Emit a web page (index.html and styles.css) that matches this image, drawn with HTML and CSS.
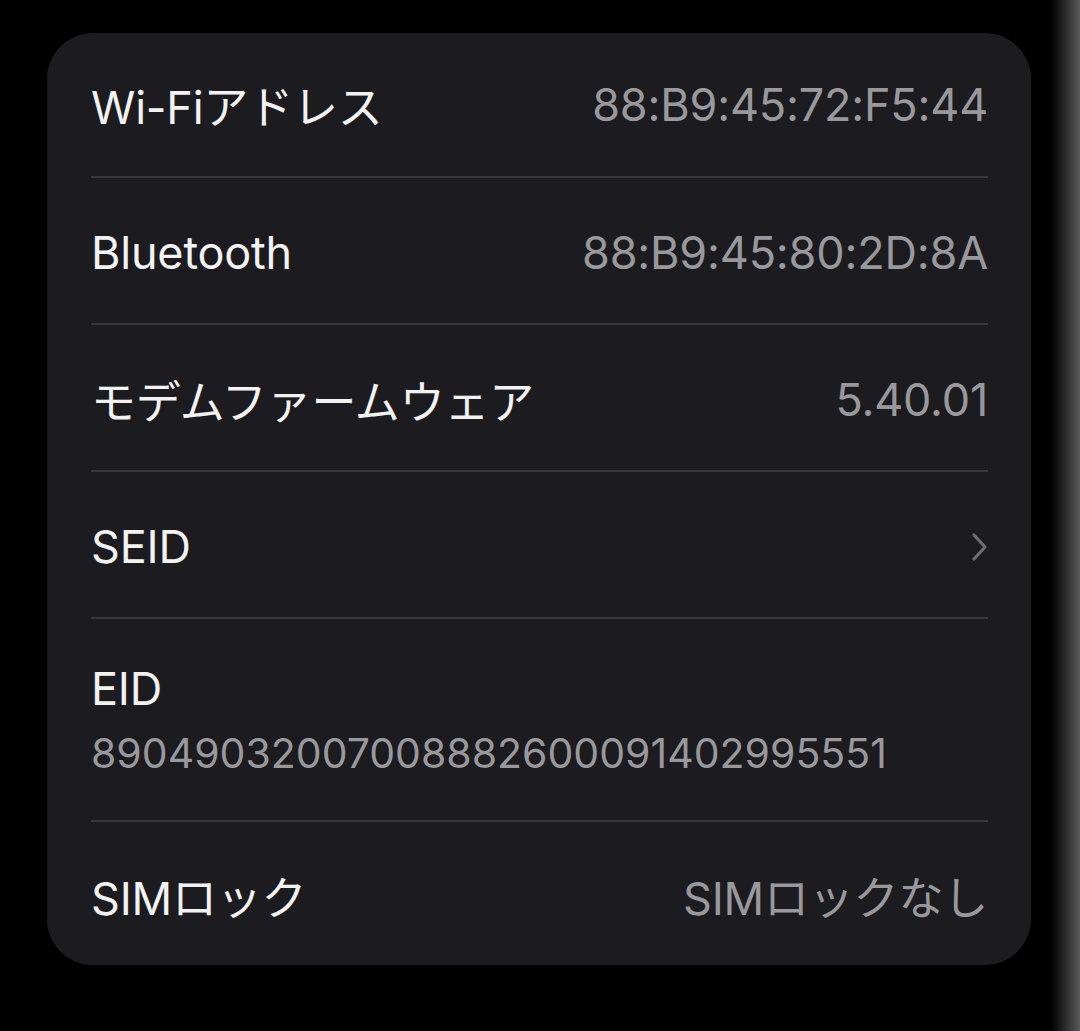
FILE: index.html
```html
<!DOCTYPE html>
<html lang="ja">
  <head>
    <meta charset="utf-8">
    <meta name="viewport" content="width=device-width, initial-scale=1">
    <title>情報</title>
    <link rel="stylesheet" href="styles.css">
  </head>
  <body>
    <div class="screen">
      <section class="card">
        <div class="row first">
          <span class="label">Wi-Fiアドレス</span>
          <span class="value">88:B9:45:72:F5:44</span>
        </div>
        <div class="row">
          <span class="label">Bluetooth</span>
          <span class="value">88:B9:45:80:2D:8A</span>
        </div>
        <div class="row">
          <span class="label">モデムファームウェア</span>
          <span class="value">5.40.01</span>
        </div>
        <div class="row">
          <span class="label">SEID</span>
          <svg class="chevron" width="22" height="32" viewBox="0 0 22 32">
            <path d="M6 4 L17 16 L6 28" fill="none" stroke="#6c6c71" stroke-width="3.2" stroke-linecap="round" stroke-linejoin="round"/>
          </svg>
        </div>
        <div class="row stacked">
          <span class="label">EID</span>
          <span class="value">89049032007008882600091402995551</span>
        </div>
        <div class="row last">
          <span class="label">SIMロック</span>
          <span class="value">SIMロックなし</span>
        </div>
      </section>
      <div class="edge"></div>
    </div>
  </body>
</html>
```

FILE: styles.css
```css
body {
    margin: 0;
    background: #000;
    color: #f2f2f2;
    font-family: Inter, "Noto Sans CJK JP", sans-serif;
    height: 1031px;
    overflow: hidden;
}

.screen {
    display: flex;
    height: 100%;
    padding-top: 33px;
    padding-left: 47px;
    box-sizing: border-box;
}

.card {
    width: 984px;
    height: 932px;
    box-sizing: border-box;
    background: #1c1b1f;
    border-radius: 46px;
    padding: 0 43px 0 44px;
    display: flex;
    flex-direction: column;
}

.row {
    display: flex;
    align-items: center;
    justify-content: space-between;
    flex: none;
    height: 147px;
    padding-top: 4px;
    box-sizing: border-box;
    border-bottom: 2px solid #38383b;
    font-size: 45px;
    letter-spacing: -0.2px;
}

.row.first {
    height: 145px;
    padding-top: 0;
}

.row.last {
    flex: 1;
    border-bottom: none;
}

.row.stacked {
    flex-direction: column;
    align-items: flex-start;
    justify-content: flex-start;
    height: 203px;
    padding-top: 42px;
    gap: 12px;
}

.row.stacked .value {
    font-size: 41px;
    letter-spacing: 0;
}

.label {
    color: #f2f2f2;
}

.value {
    color: #98989d;
}

.chevron {
    margin-right: -2px;
}

.edge {
    flex: 1;
    margin-top: -33px;
    background: linear-gradient(to right, #000 0, #000 20px, #1e1e1e 30px, #5a5a5a 100%);
}
```
